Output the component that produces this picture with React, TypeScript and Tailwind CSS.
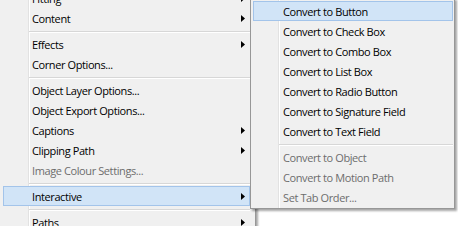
import React from "react";

type Item =
  | { kind: "item"; label: string; arrow?: boolean; disabled?: boolean; hot?: boolean }
  | { kind: "sep" };

const mainItems: Item[] = [
  { kind: "item", label: "Fitting", arrow: true },
  { kind: "item", label: "Content", arrow: true },
  { kind: "sep" },
  { kind: "item", label: "Effects", arrow: true },
  { kind: "item", label: "Corner Options..." },
  { kind: "sep" },
  { kind: "item", label: "Object Layer Options..." },
  { kind: "item", label: "Object Export Options..." },
  { kind: "item", label: "Captions", arrow: true },
  { kind: "item", label: "Clipping Path", arrow: true },
  { kind: "item", label: "Image Colour Settings...", disabled: true },
  { kind: "sep" },
  { kind: "item", label: "Interactive", arrow: true, hot: true },
  { kind: "sep" },
  { kind: "item", label: "Paths", arrow: true },
];

const subItems: Item[] = [
  { kind: "item", label: "Convert to Button", hot: true },
  { kind: "item", label: "Convert to Check Box" },
  { kind: "item", label: "Convert to Combo Box" },
  { kind: "item", label: "Convert to List Box" },
  { kind: "item", label: "Convert to Radio Button" },
  { kind: "item", label: "Convert to Signature Field" },
  { kind: "item", label: "Convert to Text Field" },
  { kind: "sep" },
  { kind: "item", label: "Convert to Object", disabled: true },
  { kind: "item", label: "Convert to Motion Path", disabled: true },
  { kind: "item", label: "Set Tab Order...", disabled: true },
];

function Arrow() {
  return (
    <svg width="4" height="7" viewBox="0 0 4 7" className="ml-auto mr-[4px] shrink-0">
      <polygon points="0,0 4,3.5 0,7" fill="#000" />
    </svg>
  );
}

function Rows({ items, textPad, sepPad }: { items: Item[]; textPad: string; sepPad: string }) {
  return (
    <div className="flex flex-col">
      {items.map((it, i) =>
        it.kind === "sep" ? (
          <div key={i} className={`h-[6px] flex flex-col pt-[3px] ${sepPad}`}>
            <div className="h-px bg-[#d7d7d7]" />
            <div className="h-px bg-white" />
          </div>
        ) : (
          <div
            key={i}
            className={`h-[20px] flex items-center border ${textPad} ${
              it.hot ? "bg-[#d1e4f7] border-[#a3c4ea]" : "border-transparent"
            } ${it.disabled ? "text-[#6d6d6d]" : "text-[#000]"}`}
          >
            <span className="whitespace-nowrap">{it.label}</span>
            {it.arrow && <Arrow />}
          </div>
        )
      )}
    </div>
  );
}

export default function App() {
  return (
    <div className="relative w-[458px] h-[226px] overflow-hidden bg-white font-['Open_Sans','Noto_Sans',sans-serif] text-[11px] tracking-[-0.4px] leading-none">
      {/* main context menu */}
      <div className="absolute left-[-1px] top-[-15px] w-[257px] border border-[#979797] shadow-[2px_2px_2px_rgba(0,0,0,0.35)] bg-[linear-gradient(to_right,#f0f0f0_28px,#e2e2e2_28px,#e2e2e2_29px,#ffffff_29px,#ffffff_30px,#f0f0f0_30px)] pl-[3px] pr-[5px] py-[2px]">
        <Rows items={mainItems} textPad="pl-[28px]" sepPad="pl-[26px]" />
      </div>

      {/* submenu */}
      <div className="absolute left-[250px] top-[-2px] w-[205px] border border-[#979797] shadow-[2px_2px_2px_rgba(0,0,0,0.35)] bg-[linear-gradient(to_right,#f0f0f0_27px,#e2e2e2_27px,#e2e2e2_28px,#ffffff_28px,#ffffff_29px,#f0f0f0_29px)] pl-[2px] pr-[1px] pt-[2px] pb-[1px]">
        <Rows items={subItems} textPad="pl-[29px]" sepPad="pl-[26px]" />
      </div>
    </div>
  );
}
